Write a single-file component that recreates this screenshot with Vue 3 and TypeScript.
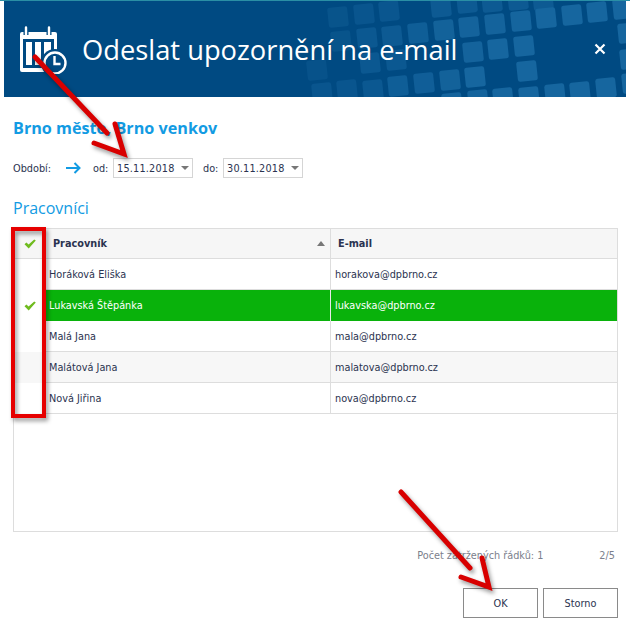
<script setup lang="ts">
const squares: [number, number, number][] = [
  [338,17,.35],[364,14,.4],[389,11,.45],[441,7,.6],[467,3,.6],[492,2,.6],[518,0,.6],[543,0,.6],
  [495,24,.9],[521,21,.95],[546,18,1],[572,15,1],[597,12,1],[623,9,1],
  [418,33,.7],[444,30,.85],[469,27,.9],[392,36,.6],[367,38,.5],[341,41,.35],
  [628,33,1],[473,52,.9],[498,49,1],[524,46,1],[630,59,1],[527,71,1],
  [370,63,.5],[396,60,.5],[317,70,.3],
  [398,86,.7],[424,83,.75],[450,80,.85],[475,77,1],[632,83,1],
  [322,93,.4],[347,90,.4],[373,90,.5],[452,103,.9],[478,100,.9],[503,98,1],[529,97,1],[555,94,1],[580,92,1],[606,88,1]
]
const rows = [
  { name: 'Horáková Eliška', mail: 'horakova@dpbrno.cz', on: false },
  { name: 'Lukavská Štěpánka', mail: 'lukavska@dpbrno.cz', on: true },
  { name: 'Malá Jana', mail: 'mala@dpbrno.cz', on: false },
  { name: 'Malátová Jana', mail: 'malatova@dpbrno.cz', on: false },
  { name: 'Nová Jiřina', mail: 'nova@dpbrno.cz', on: false }
]
</script>

<template>
  <div class="page">
    <header class="head">
      <svg class="tiles" width="622" height="96" viewBox="4 1 622 96">
        <rect v-for="(s, i) in squares" :key="i" :x="s[0] - 10" :y="s[1] - 10" width="20" height="20" rx="2.5"
          fill="#16669f" :opacity="s[2]" :transform="`rotate(-6 ${s[0]} ${s[1]})`" />
      </svg>
      <svg class="logo" width="50" height="50" viewBox="0 0 50 50" fill="none">
        <path d="M3 10a2 2 0 0 1 2-2h33a2 2 0 0 1 2 2v22h-7v16H5a2 2 0 0 1-2-2z" fill="#fff"/>
        <rect x="6" y="15" width="31" height="29" fill="#004a82"/>
        <rect x="9" y="18" width="6" height="23" fill="#fff"/>
        <rect x="18" y="18" width="6" height="23" fill="#fff"/>
        <rect x="27" y="18" width="7" height="20" fill="#fff"/>
        <path d="M9 3v8M32 3v8" stroke="#004a82" stroke-width="5"/>
        <path d="M9 3.5v7M32 3.5v7" stroke="#fff" stroke-width="2.4" stroke-linecap="round"/>
        <circle cx="38" cy="39" r="14" fill="#004a82"/>
        <circle cx="38" cy="39" r="10.5" stroke="#fff" stroke-width="2.4"/>
        <path d="M37.5 32v8h6" stroke="#fff" stroke-width="2.4"/>
      </svg>
      <h1 class="title">Odeslat upozornění na e-mail</h1>
      <svg class="close" width="12" height="12" viewBox="0 0 12 12">
        <path d="M1.5 1.5l9 9M10.5 1.5l-9 9" stroke="#fff" stroke-width="2.2"/>
      </svg>
    </header>

    <main class="body">
      <h2 class="sub">Brno město, Brno venkov</h2>
      <div class="period">
        <span class="lab-main">Období:</span>
        <svg class="go" width="15" height="12" viewBox="0 0 15 12" fill="none">
          <path d="M0 6h13M8.5 1l5 5-5 5" stroke="#129be3" stroke-width="2"/>
        </svg>
        <span class="lab">od:</span>
        <div class="date"><span>15.11.2018</span><i class="caret"></i></div>
        <span class="lab lab-do">do:</span>
        <div class="date"><span>30.11.2018</span><i class="caret"></i></div>
      </div>

      <h3 class="group">Pracovníci</h3>
      <div class="table">
        <div class="row hd">
          <div class="c-check"><svg width="12" height="10" viewBox="0 0 12 10"><path d="M.5 5.2L2.4 3.6 4.6 5.6 10.2.4 11.8 1.6 4.7 9.4z" fill="#6fbb1e"/></svg></div>
          <div class="c-name">Pracovník<i class="sort"></i></div>
          <div class="c-mail">E-mail</div>
        </div>
        <div v-for="(r, i) in rows" :key="r.mail" class="row" :class="{ on: r.on, alt: i === 3 }">
          <div class="c-check">
            <svg v-if="r.on" width="12" height="10" viewBox="0 0 12 10"><path d="M.5 5.2L2.4 3.6 4.6 5.6 10.2.4 11.8 1.6 4.7 9.4z" fill="#6fbb1e"/></svg>
          </div>
          <div class="c-name">{{ r.name }}</div>
          <div class="c-mail">{{ r.mail }}</div>
        </div>
      </div>

      <div class="foot">
        <span>Počet zatržených řádků: 1</span>
        <span class="count">2/5</span>
      </div>
      <div class="actions">
        <button class="btn">OK</button>
        <button class="btn">Storno</button>
      </div>
    </main>

    <svg class="marks" width="630" height="627" viewBox="0 0 630 627" fill="none">
      <g stroke="#d80000" stroke-width="5" stroke-linecap="round">
        <path d="M35 57L107 133"/>
        <path d="M115 124L124 154L94 143"/>
        <path d="M401 492L470 568"/>
        <path d="M482 558L489 587L461 577"/>
      </g>
      <rect x="13" y="229" width="31" height="187" stroke="#e60000" stroke-width="4"/>
    </svg>
  </div>
</template>

<style scoped>
.page {
  position: relative;
  width: 630px;
  height: 627px;
  overflow: hidden;
  background: #fff;
  font-family: "DejaVu Sans Condensed", "DejaVu Sans", sans-serif;
  font-stretch: condensed;
  font-size: 10.8px;
  color: #2b3350;
  border-top: 1px solid #2a8fa5;
  box-sizing: border-box;
}
.head {
  position: relative;
  display: flex;
  align-items: center;
  height: 96px;
  margin: 0 4px;
  padding: 0 20px 0 13px;
  background: #004a82;
  color: #fff;
  overflow: hidden;
}
.tiles { position: absolute; left: 0; top: 0; }
.logo { position: relative; margin-top: -1px; flex: none; }
.title {
  position: relative;
  margin: 0 0 0 15px;
  font-family: "Open Sans", sans-serif;
  font-stretch: normal;
  font-size: 27.3px;
  font-weight: 400;
  white-space: nowrap;
  flex: 1;
}
.close { position: relative; flex: none; }
.body { padding: 0 13px; }
.sub {
  margin: 20px 0 0;
  font-family: "Open Sans", sans-serif;
  font-stretch: normal;
  font-size: 16.2px;
  line-height: 22px;
  font-weight: 700;
  color: #129be3;
}
.period {
  display: flex;
  align-items: center;
  height: 20px;
  margin-top: 19px;
}
.lab-main { width: 53px; }
.lab { width: 20px; margin-left: 12px; flex: none; }
.lab-do { margin-left: 10px; }
.go { flex: none; }
.date {
  display: flex;
  align-items: center;
  justify-content: space-between;
  box-sizing: border-box;
  width: 80px;
  height: 20px;
  padding: 0 3px 0 3px;
  border: 1px solid #d5d5d5;
  letter-spacing: .2px;
  flex: none;
}
.caret {
  width: 0; height: 0;
  border-left: 4px solid transparent;
  border-right: 4px solid transparent;
  border-top: 4px solid #777;
}
.group {
  margin: 19px 0 0;
  font-family: "Open Sans", sans-serif;
  font-stretch: normal;
  font-size: 16px;
  line-height: 22px;
  font-weight: 400;
  color: #129be3;
}
.table {
  box-sizing: border-box;
  width: 605px;
  height: 304px;
  margin-top: 9px;
  border: 1px solid #ddd;
}
.row {
  display: grid;
  grid-template-columns: 32px 285px 1fr;
  height: 31px;
  box-sizing: border-box;
  border-bottom: 1px solid #ddd;
  line-height: 31px;
}
.hd { height: 30px; background: #f6f6f6; font-weight: 700; line-height: 29px; }
.alt { background: #f7f7f7; }
.c-check { display: flex; align-items: center; justify-content: center; background: #fff; }
.hd .c-check, .alt .c-check { background: inherit; }
.c-name { position: relative; padding-left: 3px; border-right: 1px solid #ddd; }
.hd .c-name { padding-left: 7px; }
.c-mail { padding-left: 4px; }
.hd .c-mail { padding-left: 7px; }
.on .c-name, .on .c-mail { background: #09b20b; color: #fff; }
.on .c-name { border-right-color: #e8e8e8; }
.sort {
  position: absolute;
  right: 5px;
  top: 12px;
  width: 0; height: 0;
  border-left: 4px solid transparent;
  border-right: 4px solid transparent;
  border-bottom: 5px solid #777;
}
.foot {
  display: flex;
  justify-content: flex-end;
  gap: 56px;
  margin-top: 16px;
  padding-right: 2px;
  line-height: 16px;
  color: #7b808c;
}
.actions {
  display: flex;
  justify-content: flex-end;
  gap: 5px;
  margin-top: 24px;
  margin-right: -1px;
}
.btn {
  box-sizing: border-box;
  width: 75px;
  height: 30px;
  padding: 0;
  background: #fff;
  border: 1px solid #8a8a8a;
  font: inherit;
  color: #2b3350;
}
.marks {
  position: absolute;
  left: 0;
  top: -1px;
  pointer-events: none;
  filter: drop-shadow(2px 3px 2px rgba(0,0,0,.4));
}
</style>
